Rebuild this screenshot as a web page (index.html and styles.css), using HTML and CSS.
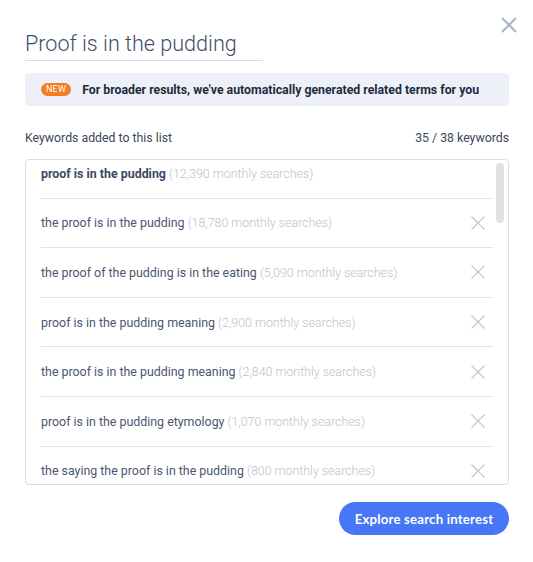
FILE: index.html
```html
<!DOCTYPE html>
<html>
<head>
<meta charset="utf-8">
<link rel="stylesheet" href="styles.css">
</head>
<body>
<div class="modal">
  <button class="close" aria-label="Close">
    <svg width="16" height="16" viewBox="0 0 16 16"><path d="M1 1L15 15M15 1L1 15" stroke="#a9b3c4" stroke-width="2" fill="none"/></svg>
  </button>
  <div class="title-wrap"><h1 class="title">Proof is in the pudding</h1></div>
  <div class="banner"><span class="badge">NEW</span><span class="banner-text">For broader results, we've automatically generated related terms for you</span></div>
  <div class="list-head"><span>Keywords added to this list</span><span>35 / 38 keywords</span></div>
  <div class="list">
    <div class="list-inner">
      <div class="row"><span class="kw"><b>proof is in the pudding</b> <span class="count">(12,390 monthly searches)</span></span></div>
      <div class="row"><span class="kw">the proof is in the pudding <span class="count">(18,780 monthly searches)</span></span><span class="x"><svg width="14" height="14" viewBox="0 0 14 14"><path d="M0.5 0.5L13.5 13.5M13.5 0.5L0.5 13.5" stroke="#c3c8d1" stroke-width="1.3" fill="none"/></svg></span></div>
      <div class="row"><span class="kw">the proof of the pudding is in the eating <span class="count">(5,090 monthly searches)</span></span><span class="x"><svg width="14" height="14" viewBox="0 0 14 14"><path d="M0.5 0.5L13.5 13.5M13.5 0.5L0.5 13.5" stroke="#c3c8d1" stroke-width="1.3" fill="none"/></svg></span></div>
      <div class="row"><span class="kw">proof is in the pudding meaning <span class="count">(2,900 monthly searches)</span></span><span class="x"><svg width="14" height="14" viewBox="0 0 14 14"><path d="M0.5 0.5L13.5 13.5M13.5 0.5L0.5 13.5" stroke="#c3c8d1" stroke-width="1.3" fill="none"/></svg></span></div>
      <div class="row"><span class="kw">the proof is in the pudding meaning <span class="count">(2,840 monthly searches)</span></span><span class="x"><svg width="14" height="14" viewBox="0 0 14 14"><path d="M0.5 0.5L13.5 13.5M13.5 0.5L0.5 13.5" stroke="#c3c8d1" stroke-width="1.3" fill="none"/></svg></span></div>
      <div class="row"><span class="kw">proof is in the pudding etymology <span class="count">(1,070 monthly searches)</span></span><span class="x"><svg width="14" height="14" viewBox="0 0 14 14"><path d="M0.5 0.5L13.5 13.5M13.5 0.5L0.5 13.5" stroke="#c3c8d1" stroke-width="1.3" fill="none"/></svg></span></div>
      <div class="row"><span class="kw">the saying the proof is in the pudding <span class="count">(800 monthly searches)</span></span><span class="x"><svg width="14" height="14" viewBox="0 0 14 14"><path d="M0.5 0.5L13.5 13.5M13.5 0.5L0.5 13.5" stroke="#c3c8d1" stroke-width="1.3" fill="none"/></svg></span></div>
    </div>
    <div class="scrollbar"></div>
  </div>
  <div class="actions"><button class="explore">Explore search interest</button></div>
</div>
</body>
</html>
```
FILE: styles.css
```css
* { box-sizing: border-box; }
html, body { margin: 0; padding: 0; background: #fff; }
body { font-family: Roboto, "Noto Sans", sans-serif; }
.modal {
  position: relative;
  width: 533px;
  height: 562px;
  padding: 26px 24px 0 25px;
}
.close {
  position: absolute;
  top: 17px;
  right: 16px;
  width: 16px;
  height: 16px;
  padding: 0;
  border: 0;
  background: none;
  display: block;
}
.close svg { display: block; }
.title-wrap {
  width: 238px;
  border-bottom: 1px solid #d5dbe8;
  padding-top: 4px;
  padding-bottom: 2px;
}
.title {
  margin: 0;
  font-size: 21.6px;
  line-height: 28px;
  font-weight: 300;
  color: #3e4f6a;
}
.banner {
  margin-top: 12px;
  height: 33px;
  background: #edf1f7;
  border-radius: 4px;
  display: flex;
  align-items: center;
  padding-left: 16px;
  gap: 11px;
}
.badge {
  background: #f37b20;
  color: #fff;
  font-size: 9px;
  line-height: 13px;
  height: 13px;
  padding: 0 5px;
  border-radius: 7px;
  letter-spacing: 0.2px;
}
.banner-text {
  font-size: 12.3px;
  font-weight: 700;
  color: #1e2b42;
}
.list-head {
  display: flex;
  justify-content: space-between;
  margin-top: 25px;
  font-size: 12.3px;
  line-height: 15px;
  color: #3b4659;
}
.list {
  position: relative;
  margin-top: 13px;
  height: 326px;
  border: 1px solid #d6dce9;
  border-radius: 4px;
  overflow: hidden;
}
.list-inner {
  margin-top: -11px;
  padding: 0 15px;
}
.row {
  height: 49.6px;
  border-bottom: 1px solid #dce1eb;
  display: flex;
  align-items: center;
  justify-content: space-between;
}
.kw {
  font-size: 12.4px;
  color: #4a5870;
}
.kw b { font-weight: 700; color: #3a4a64; }
.count { color: #bcc2cc; font-weight: 300; }
.x { width: 14px; height: 14px; margin-right: 8px; }
.x svg { display: block; }
.scrollbar {
  position: absolute;
  top: 3px;
  right: 4px;
  width: 8px;
  height: 60px;
  border-radius: 4px;
  background: #e1e1e1;
}
.actions {
  display: flex;
  justify-content: flex-end;
  margin-top: 17px;
}
.explore {
  width: 170px;
  height: 33px;
  border: 0;
  border-radius: 17px;
  background: #4776f6;
  color: #fff;
  font-family: Lato, sans-serif;
  font-weight: 700;
  font-size: 13.2px;
  letter-spacing: 0.2px;
}
```
